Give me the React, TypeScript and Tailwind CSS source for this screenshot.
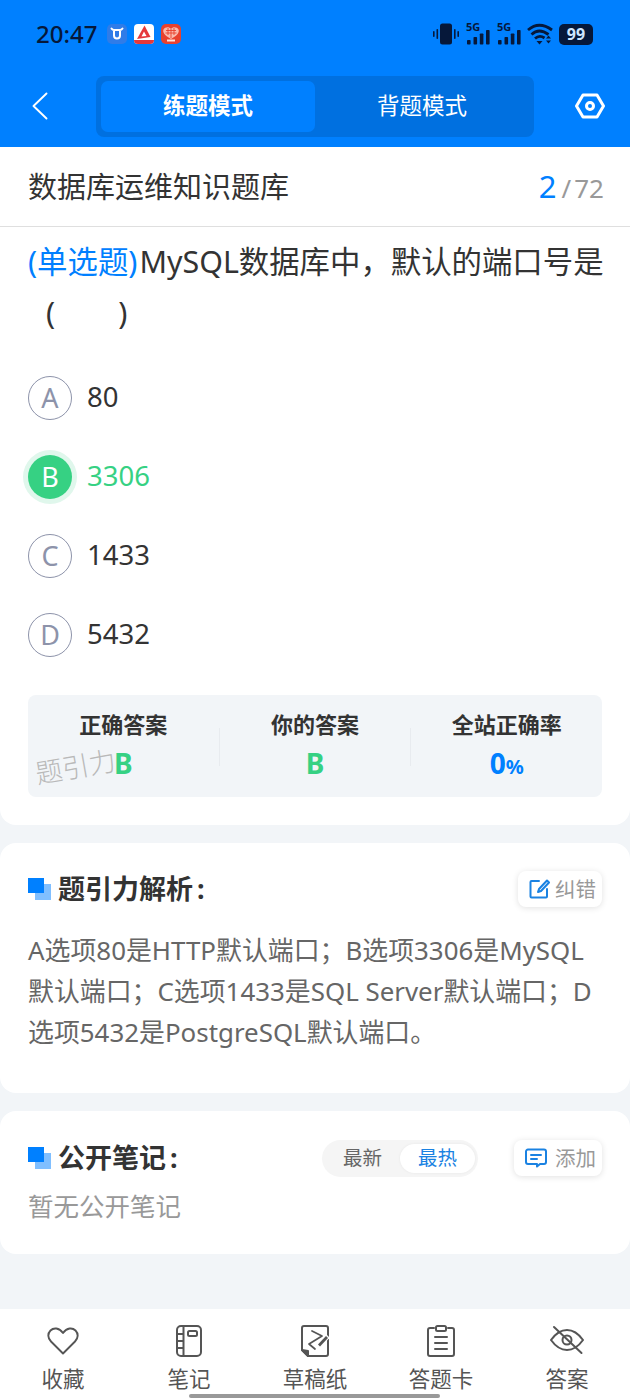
import React from "react";

const FONT = "font-['Noto_Sans','Noto_Sans_CJK_SC',sans-serif]";

function StatusIcons() {
  return (
    <div className="flex items-center gap-[6px] text-[#06183a]">
      <svg width="26" height="22" viewBox="0 0 26 22" fill="currentColor">
        <rect x="7" y="0.5" width="12" height="21" rx="2.5" />
        <rect x="3.5" y="6" width="1.6" height="10" rx="0.8" />
        <rect x="0" y="8" width="1.6" height="6" rx="0.8" />
        <rect x="21" y="6" width="1.6" height="10" rx="0.8" />
        <rect x="24.4" y="8" width="1.6" height="6" rx="0.8" />
      </svg>
      <Signal />
      <Signal />
      <svg width="26" height="22" viewBox="0 0 26 22" fill="none" stroke="currentColor" strokeWidth="2.8">
        <path d="M1 7 Q12 -2.5 25 7" />
        <path d="M4.5 11.5 Q12 4.5 21.5 11.5" />
        <path d="M8 15.5 Q12.5 11.5 17.5 15" />
        <path d="M9.5 18 L12.5 21.5 L15.5 18 Z" fill="currentColor" stroke="none" />
        <path d="M19 15.5 L21.5 12.5 L24 15.5 Z M19 17.5 L21.5 20.5 L24 17.5 Z" fill="currentColor" stroke="none" />
      </svg>
      <div className="flex items-center">
        <div className="w-[34px] h-[21px] rounded-[5px] bg-[#06183a] flex items-center justify-center text-[#cfe6ff] text-[16px] font-bold leading-none">99</div>
      </div>
    </div>
  );
}

function Signal() {
  return (
    <div className="relative w-[25px] h-[22px]">
      <span className="absolute left-[1px] top-[-3px] text-[11px] font-bold leading-[14px]">5G</span>
      <svg className="absolute left-0 top-0" width="25" height="22" viewBox="0 0 25 22" fill="currentColor">
        <rect x="2" y="17" width="3.6" height="4.5" rx="0.8" />
        <rect x="8.5" y="14" width="3.6" height="7.5" rx="0.8" />
        <rect x="14.8" y="10.5" width="3.6" height="11" rx="0.8" />
        <rect x="21" y="7" width="3.6" height="14.5" rx="0.8" />
      </svg>
    </div>
  );
}

function AppIcons() {
  return (
    <div className="flex items-center gap-[7px]">
      <div className="w-[20px] h-[20px] rounded-[5px] bg-[#2f7ce8] flex items-center justify-center">
        <svg width="14" height="14" viewBox="0 0 14 14" fill="none" stroke="white" strokeWidth="2" strokeLinecap="round">
          <path d="M1.5 1.5 Q2.5 3 4 3 H10 Q11.5 3 12.5 1.5 M4 3v5.5a3 3 0 0 0 6 0V3" />
        </svg>
      </div>
      <div className="w-[20px] h-[20px] rounded-[4px] bg-white overflow-hidden">
        <svg width="20" height="20" viewBox="0 0 20 20">
          <path d="M10.5 1.5 L16.5 13 L3 15 Z" fill="#e5383b" />
          <path d="M10 7.5 L12.5 12 L7.5 12.5 Z" fill="white" />
          <rect x="0" y="16" width="20" height="4" fill="#e5383b" />
        </svg>
      </div>
      <div className="w-[20px] h-[20px] rounded-[5px] bg-[#e8412e] flex items-center justify-center">
        <svg width="18" height="18" viewBox="0 0 18 18">
          <path d="M9 14 C2 10 0.5 7 1.5 4.5 C3 1.5 7.5 1.5 9 4 C10.5 1.5 15 1.5 16.5 4.5 C17.5 7 16 10 9 14Z" fill="#f9b9ac" />
          <path d="M4 5.5h10M3.5 8h11M6 3v7M9 4v9M12 3v7" stroke="#e8412e" strokeWidth="0.9" />
          <rect x="5" y="14.5" width="8" height="2" fill="#ffe3dc" />
        </svg>
      </div>
    </div>
  );
}

function Logo() {
  return (
    <div className="relative w-[23px] h-[22px] shrink-0">
      <div className="absolute right-0 bottom-0 w-[16px] h-[16px] bg-[#80bfff]" />
      <div className="absolute left-0 top-0 w-[16px] h-[15px] bg-[#0080ff]" />
    </div>
  );
}

function Option({ letter, text, on }: { letter: string; text: string; on?: boolean }) {
  return (
    <div className="flex items-center h-[79px]">
      {on ? (
        <div className="w-[44px] h-[44px] rounded-full bg-[#36d183] ring-[5px] ring-[#e0f7ec] flex items-center justify-center text-white text-[27px] leading-none">
          {letter}
        </div>
      ) : (
        <div className="w-[44px] h-[44px] rounded-full border-[1.5px] border-[#8d93aa] flex items-center justify-center text-[#8d93aa] text-[27px] leading-none">
          {letter}
        </div>
      )}
      <span className={`ml-[15px] mb-[2px] text-[27.5px] ${on ? "text-[#36d183]" : "text-[#333333]"}`}>{text}</span>
    </div>
  );
}

function Stat({ label, children }: { label: string; children: React.ReactNode }) {
  return (
    <div className="flex-1 flex flex-col items-center pt-[13px]">
      <span className="text-[22px] leading-[32px] font-bold text-[#333333]">{label}</span>
      <div className="h-[38px] mt-[4px] flex items-center font-bold text-[#36d183] text-[28px] leading-none">{children}</div>
    </div>
  );
}

function NavItem({ label, children }: { label: string; children: React.ReactNode }) {
  return (
    <div className="w-[126px] flex flex-col items-center">
      <div className="h-[36px] flex items-center justify-center">{children}</div>
      <span className="mt-[5px] text-[21.5px] leading-[30px] text-[#555555]">{label}</span>
    </div>
  );
}

export default function App() {
  return (
    <div className={`${FONT} relative w-[630px] h-[1400px] overflow-hidden bg-[#f2f5f8] flex flex-col`}>
      {/* Header */}
      <div className="h-[147px] bg-[#0080ff] shrink-0">
        <div className="h-[68px] pl-[36px] pr-[37px] flex items-center justify-between">
          <div className="flex items-center gap-[10px]">
            <span className="text-[24px] font-medium text-[#06183a] leading-none">20:47</span>
            <AppIcons />
          </div>
          <StatusIcons />
        </div>
        <div className="flex items-center h-[62px] mt-[7px]">
          <div className="w-[96px] pl-[32px]">
            <svg width="16" height="28" viewBox="0 0 16 28" fill="none" stroke="white" strokeWidth="1.9" strokeLinecap="round" strokeLinejoin="round">
              <path d="M14.5 1.5 L1.5 14 L14.5 26.5" />
            </svg>
          </div>
          <div className="w-[438px] h-[61px] rounded-[8px] bg-[#0070e0] p-[5px] flex">
            <div className="w-[214px] rounded-[7px] bg-[#0080ff] flex items-center justify-center text-white text-[22.5px] font-bold">练题模式</div>
            <div className="flex-1 flex items-center justify-center text-white text-[22.5px]">背题模式</div>
          </div>
          <div className="flex-1 flex justify-center pl-[16px]">
            <svg width="30" height="26" viewBox="0 0 30 26" fill="none" stroke="white" strokeWidth="3" strokeLinejoin="round">
              <path d="M8 2 H22 L28.5 13 L22 24 H8 L1.5 13 Z" />
              <circle cx="15" cy="13" r="3.5" />
            </svg>
          </div>
        </div>
      </div>

      {/* Question card */}
      <div className="bg-white rounded-b-[16px] shrink-0 h-[678px]">
        <div className="h-[80px] px-[28px] flex items-center justify-between border-b border-[#dfdfdf]">
          <span className="text-[29px] text-[#333333]">数据库运维知识题库</span>
          <div className="flex items-baseline mr-[-2px]">
            <span className="text-[31px] text-[#0080ff]">2</span>
            <span className="text-[26px] text-[#999999] ml-[5px]">/</span>
            <span className="text-[26px] text-[#999999] ml-[3px]">72</span>
          </div>
        </div>
        <div className="pl-[28px] pr-[20px] pt-[9px] text-[30.4px] leading-[51px] text-[#333333]">
          <span className="text-[#0080ff] mr-[2px]">(单选题)</span>MySQL数据库中，默认的端口号是
          <div className="pl-[18px] whitespace-pre">(        )</div>
        </div>
        <div className="px-[28px] mt-[20px]">
          <Option letter="A" text="80" />
          <Option letter="B" text="3306" on />
          <Option letter="C" text="1433" />
          <Option letter="D" text="5432" />
        </div>
        <div className="relative mx-[28px] mt-[21px] h-[102px] rounded-[8px] bg-[#f2f5f8] flex">
          <Stat label="正确答案">B</Stat>
          <div className="w-[1px] h-[38px] bg-[#e8ebef] mt-[33px]" />
          <Stat label="你的答案">B</Stat>
          <div className="w-[1px] h-[38px] bg-[#e8ebef] mt-[33px]" />
          <Stat label="全站正确率">
            <span className="text-[#0080ff]">0<span className="text-[20px]">%</span></span>
          </Stat>
          <span className="absolute left-[7px] top-[58px] text-[27px] leading-none font-light text-[#b9b9b9] -rotate-[10deg]">题引力</span>
        </div>
      </div>

      {/* Analysis card */}
      <div className="mt-[18px] bg-white rounded-[16px] h-[250px] px-[28px] pt-[27px] shrink-0">
        <div className="flex items-center justify-between h-[38px]">
          <div className="flex items-center gap-[7px]">
            <Logo />
            <span className="text-[27px] font-bold text-[#333333]">题引力解析<span className="ml-[4px]">:</span></span>
          </div>
          <div className="h-[36px] w-[84px] pl-[10px] rounded-[8px] bg-white shadow-[0_1px_6px_rgba(0,0,0,0.12)] flex items-center gap-[5px]">
            <svg width="22" height="22" viewBox="0 0 22 22" fill="none" stroke="#1a82e2" strokeWidth="2" strokeLinecap="round" strokeLinejoin="round">
              <path d="M11 3H3.5a1 1 0 0 0-1 1v14.5a1 1 0 0 0 1 1H18a1 1 0 0 0 1-1V11" />
              <path d="M19 2.5 L11 11 L10 14 L13 13 L21 4.5 Z" />
            </svg>
            <span className="text-[20.5px] text-[#999999] leading-none">纠错</span>
          </div>
        </div>
        <p className="mt-[22px] text-[25.9px] leading-[41px] text-[#666666]">
          A选项80是HTTP默认端口；B选项3306是MySQL默认端口；C选项1433是SQL Server默认端口；D选项5432是PostgreSQL默认端口。
        </p>
      </div>

      {/* Notes card */}
      <div className="mt-[18px] bg-white rounded-[16px] h-[143px] px-[28px] pt-[28px] shrink-0">
        <div className="flex items-center h-[38px]">
          <Logo />
          <span className="ml-[7px] text-[27px] font-bold text-[#333333]">公开笔记<span className="ml-[4px]">:</span></span>
          <div className="ml-auto mr-[36px] w-[156px] h-[37px] rounded-full bg-[#f5f5f5] px-[3px] py-[4px] flex items-center">
            <span className="w-[75px] text-center text-[19.5px] text-[#666666]">最新</span>
            <span className="flex-1 h-full rounded-full bg-white shadow-[0_0_3px_rgba(0,0,0,0.06)] flex items-center justify-center text-[19.5px] text-[#1a82e2]">最热</span>
          </div>
          <div className="h-[36px] w-[88px] pl-[11px] rounded-[8px] bg-white shadow-[0_1px_6px_rgba(0,0,0,0.12)] flex items-center gap-[8px]">
            <svg width="22" height="20" viewBox="0 0 22 20" fill="none" stroke="#1a82e2" strokeWidth="2" strokeLinecap="round" strokeLinejoin="round">
              <path d="M3 1.5H19a2 2 0 0 1 2 2V14a2 2 0 0 1-2 2H15L12 18.5V16H3a2 2 0 0 1-2-2V3.5a2 2 0 0 1 2-2Z" />
              <path d="M6 7h10M6 11h6" />
            </svg>
            <span className="text-[20.5px] text-[#999999] leading-none">添加</span>
          </div>
        </div>
        <p className="mt-[9px] text-[25.5px] leading-[40px] text-[#999999]">暂无公开笔记</p>
      </div>

      {/* Bottom bar */}
      <div className="mt-auto h-[91px] bg-white flex items-start pt-[14px] shrink-0">
        <NavItem label="收藏">
          <svg width="32" height="28" viewBox="0 0 32 28" fill="none" stroke="#555" strokeWidth="1.9" strokeLinejoin="round">
            <path d="M16 26.5 L4 14.5 C0.5 11 0.5 6.5 3.5 3.5 C6.5 0.5 12 0.5 16 6 C20 0.5 25.5 0.5 28.5 3.5 C31.5 6.5 31.5 11 28 14.5 Z" />
          </svg>
        </NavItem>
        <NavItem label="笔记">
          <svg width="26" height="32" viewBox="0 0 26 32" fill="none" stroke="#555" strokeWidth="2" strokeLinejoin="round">
            <rect x="1" y="1" width="24" height="30" rx="4" />
            <path d="M7.5 1v30M1 9h6.5M1 16h6.5M1 23h6.5" />
            <rect x="12" y="6" width="9" height="5" rx="1.5" />
          </svg>
        </NavItem>
        <NavItem label="草稿纸">
          <svg width="28" height="32" viewBox="0 0 28 32" fill="none" stroke="#555" strokeWidth="2" strokeLinejoin="round" strokeLinecap="round">
            <path d="M3 1H25a2 2 0 0 1 2 2V29a2 2 0 0 1-2 2H7L1 25V3a2 2 0 0 1 2-2Z" />
            <path d="M1 25 L7 31 V26 Z" fill="#555" />
            <path d="M11 6 L21 11 L8 19 L14 24" strokeWidth="1.7" />
            <path d="M17 21 L27 11" stroke="white" strokeWidth="5" strokeLinecap="butt" />
            <path d="M18 20.5 L26 12" strokeWidth="2.8" strokeLinecap="butt" />
          </svg>
        </NavItem>
        <NavItem label="答题卡">
          <svg width="28" height="32" viewBox="0 0 28 32" fill="none" stroke="#555" strokeWidth="2" strokeLinejoin="round" strokeLinecap="round">
            <path d="M7 3H3a2 2 0 0 0-2 2V29a2 2 0 0 0 2 2H25a2 2 0 0 0 2-2V5a2 2 0 0 0-2-2H21" />
            <rect x="9" y="1" width="10" height="5" rx="1.5" />
            <path d="M8 12h12M8 18h12M8 24h12" />
          </svg>
        </NavItem>
        <NavItem label="答案">
          <svg width="34" height="32" viewBox="0 0 34 32" fill="none" stroke="#555" strokeWidth="2" strokeLinecap="round" strokeLinejoin="round">
            <path d="M1 15 C6 8 11 5 17 5 C23 5 28 8 33 15 C28 22 23 25 17 25 C11 25 6 22 1 15Z" />
            <circle cx="17" cy="15" r="4.5" />
            <path d="M4 2 L31.5 28" />
          </svg>
        </NavItem>
      </div>

      {/* Home indicator */}
      <div className="absolute left-[189px] bottom-[2px] w-[251px] h-[4px] rounded-full bg-[#999999]" />
    </div>
  );
}
